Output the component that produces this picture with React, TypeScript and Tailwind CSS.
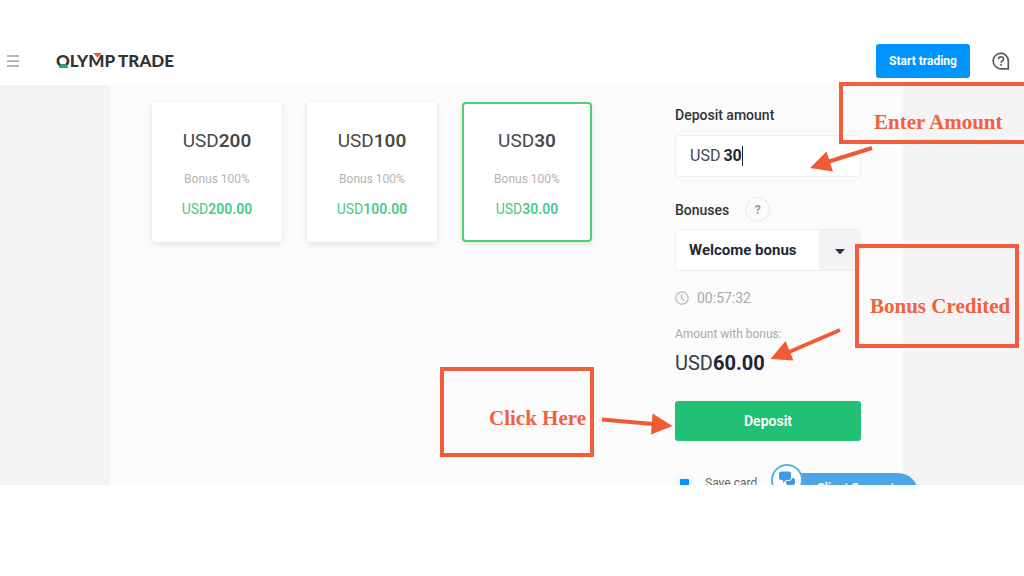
import React, { useState } from "react";
import { clsx } from "clsx";

interface DepositOption {
  amount: string;
  bonus: string;
}

const options: DepositOption[] = [
  { amount: "200", bonus: "200.00" },
  { amount: "100", bonus: "100.00" },
  { amount: "30", bonus: "30.00" },
];

const Logo = () => (
  <a href="#" className="relative ml-9 font-[Lato,sans-serif] text-[17px] leading-5 font-black text-[#333]">
    OLYMP TRADE
    <svg className="absolute inset-0 h-5 w-full" aria-hidden="true">
      <path d="M2.500 17 5 13h5l2.500 4z" fill="#1fae6d" />
      <path d="M37 2h9l-4.500 4.500z" fill="#f0573a" />
    </svg>
  </a>
);

const Header = () => (
  <header className="flex h-12 items-center bg-white pr-3.5 pl-1.5">
    <button aria-label="Menu">
      <svg width="14" height="12" viewBox="0 0 14 12" stroke="#a3a3a3" strokeWidth="1.3">
        <path d="M1 1h12M1 6h12M1 11h12" />
      </svg>
    </button>
    <Logo />
    <button className="mr-[22px] ml-auto h-[34px] w-[94px] rounded-[3px] bg-[#0094ff] text-xs font-bold text-white">Start trading</button>
    <button aria-label="Help">
      <svg width="18" height="18" viewBox="0 0 18 18" fill="none" stroke="#555a62" strokeWidth="1.700">
        <path d="M9 1.200a7.800 7.800 0 1 0 0 15.600h7.300V9A7.500 7.800 0 0 0 9 1.200z" />
        <path d="M6.600 7.200c0-3.100 4.900-3.100 4.900 0 0 1.700-2.400 1.800-2.400 3.600M9.100 12v1.700" />
      </svg>
    </button>
  </header>
);

interface OptionCardProps {
  option: DepositOption;
  selected: boolean;
  onSelect: () => void;
}

const OptionCard = ({ option, selected, onSelect }: OptionCardProps) => (
  <button
    onClick={onSelect}
    className={clsx(
      "flex h-[140px] w-[130px] flex-col items-center rounded-[4px] border-2 bg-white pt-[25px] shadow-[0_2px_6px_rgba(0,0,0,0.1)]",
      selected ? "border-[#4fd077]" : "border-white",
    )}
  >
    <span className="text-[19px] leading-6 text-[#4a4a4a]">
      USD<span className="font-semibold">{option.amount}</span>
    </span>
    <span className="mt-[18px] text-xs leading-4 text-[#b3b3b3]">Bonus 100%</span>
    <span className="mt-3 text-sm leading-5 text-[#4cc888]">
      USD<span className="font-semibold">{option.bonus}</span>
    </span>
  </button>
);

const DepositForm = ({ amount, onChange }: { amount: string; onChange: (value: string) => void }) => (
  <form className="flex w-[186px] flex-col" onSubmit={(e) => e.preventDefault()}>
    <label htmlFor="amount" className="mt-[3px] text-sm leading-5 font-medium text-[#333]">
      Deposit amount
    </label>
    <div className="mt-2.5 flex h-[42px] items-center gap-[3px] rounded-[3px] border border-[#eee] bg-white px-3.5 text-base text-[#444b55]">
      <span>USD</span>
      <input
        id="amount"
        value={amount}
        onChange={(e) => onChange(e.target.value)}
        className="field-sizing-content h-5 border-r border-[#1f2937] font-bold text-[#1f2937] outline-none"
      />
    </div>
    <div className="mt-5 flex items-center gap-4">
      <label htmlFor="bonus" className="text-sm font-medium text-[#333]">
        Bonuses
      </label>
      <button type="button" aria-label="About bonuses" className="size-[25px] rounded-full border border-[#e8e8e8] text-xs font-bold text-[#999]">
        ?
      </button>
    </div>
    <div className="relative mt-[7px] flex">
      <select id="bonus" className="h-[42px] w-full appearance-none rounded-[3px] border border-[#eee] bg-[linear-gradient(to_left,#f3f3f3_41px,white_41px)] pl-[13px] text-[15px] font-bold text-[#1f2937]">
        <option>Welcome bonus</option>
      </select>
      <svg className="pointer-events-none absolute top-5 right-4" width="10" height="6" viewBox="0 0 10 6">
        <path d="M0 0h10L5 5.500z" fill="#2d3250" />
      </svg>
    </div>
    <div className="mt-[17px] flex items-center gap-2 text-sm leading-5 text-[#aaa]">
      <svg width="14" height="14" viewBox="0 0 14 14" fill="none" stroke="#b5b5b5" strokeWidth="1.200">
        <circle cx="7" cy="7" r="6.200" />
        <path d="M6.500 3v4l2.500 3" />
      </svg>
      00:57:32
    </div>
    <div className="mt-4 text-xs leading-5 text-[#aaa]">Amount with bonus:</div>
    <div className="mt-[5px] text-xl leading-7 text-[#333d4a]">
      USD<b className="text-[#1b2535]">60.00</b>
    </div>
    <button className="mt-6 h-10 rounded-[3px] bg-[#21c074] text-sm font-semibold text-white">Deposit</button>
    <label className="mt-8 flex items-center gap-4 pl-[5px] text-xs leading-5 text-[#666]">
      <input type="checkbox" defaultChecked className="size-[9px] appearance-none rounded-[1px] bg-[#0094ff] shadow-[0_0_4px_3px_#eaf5ff]" />
      Save card
    </label>
  </form>
);

const ChatButton = () => (
  <button className="absolute top-[379px] left-[661px] flex items-start whitespace-nowrap">
    <span className="z-10 flex size-8 shrink-0 items-center justify-center rounded-full border-2 border-[#5aaee8] bg-white">
      <svg width="18" height="18" viewBox="0 0 18 18" fill="#3d9be2">
        <path d="M10 7h5q2 0 2 2v3q0 2-2 2v3l-3-3h-2q-2 0-2-2V9q0-2 2-2z" />
        <path d="M3 0h8q2.500 0 2.500 2.500V7q0 2.500-2.500 2.500H8L4.500 13V9.500H3Q.5 9.500.5 7V2.500Q.5 0 3 0z" stroke="white" strokeWidth="1" />
      </svg>
    </span>
    <span className="mt-[9px] -ml-2 h-10 w-[123px] shrink-0 rounded-r-[30px] bg-[#4ca5e6] pl-[22px] text-left text-xs leading-[30px] font-bold text-white">Client Support</span>
  </button>
);

// Hand-placed callouts drawn over the page
const Callouts = () => (
  <div className="pointer-events-none absolute inset-0 overflow-hidden font-['Liberation_Serif',serif] text-[21px] leading-6 font-bold text-[#f0623f]">
    <div className="absolute top-[82px] left-[839px] h-[62px] w-[190px] border-4 border-[#f15f3a] pt-6 pl-[31px]">Enter Amount</div>
    <div className="absolute top-[244px] left-[855px] h-[104px] w-[164px] border-4 border-[#f15f3a] pt-[46px] pl-[11px] whitespace-nowrap">Bonus Credited</div>
    <div className="absolute top-[367px] left-[440px] h-[90px] w-[154px] border-4 border-[#f15f3a] pt-[35px] pl-[45px] whitespace-nowrap">Click Here</div>
    <svg className="absolute top-0 left-0" width="1024" height="576" fill="#ef5b34" stroke="#ef5b34">
      <path d="M872 148 829 161.500M840 330 789 352M602 419.500 653 424" strokeWidth="4" />
      <path d="M810 168 826.500 151.500 833 171.500zM770.500 359 785.500 341 793.500 360.500zM672.500 426 652.500 413.500 651 434.500z" stroke="none" />
    </svg>
  </div>
);

export default function App() {
  const [amount, setAmount] = useState("30");

  return (
    <div className="relative min-h-screen bg-white pt-[37px] font-[Roboto,sans-serif]">
      <Header />
      <main className="relative max-h-[400px] overflow-hidden bg-[#f4f4f4] pr-[121px] pl-[110px]">
        <div className="relative flex justify-between bg-[#fbfbfb] px-[42px] pt-[17px] pb-10">
          <div className="flex items-start gap-[25px]">
            {options.map((option) => (
              <OptionCard key={option.amount} option={option} selected={option.amount === amount} onSelect={() => setAmount(option.amount)} />
            ))}
          </div>
          <DepositForm amount={amount} onChange={setAmount} />
          <ChatButton />
        </div>
      </main>
      <Callouts />
    </div>
  );
}
